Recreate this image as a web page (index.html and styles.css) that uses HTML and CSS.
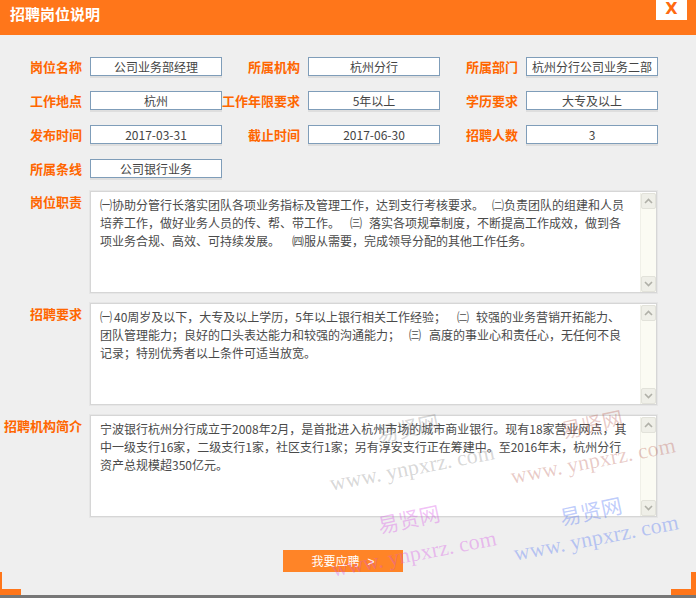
FILE: index.html
```html
<!DOCTYPE html>
<html lang="zh-CN">
<head>
<meta charset="utf-8">
<title>招聘岗位说明</title>
<link rel="stylesheet" href="styles.css">
</head>
<body>
<div class="dialog">
  <div class="header">
    <h1 class="title">招聘岗位说明</h1>
    <span class="close">X</span>
  </div>

  <div class="fields">
    <div class="row">
      <div class="field"><span class="lbl">岗位名称</span><div class="val">公司业务部经理</div></div>
      <div class="field"><span class="lbl">所属机构</span><div class="val">杭州分行</div></div>
      <div class="field"><span class="lbl">所属部门</span><div class="val">杭州分行公司业务二部</div></div>
    </div>
    <div class="row">
      <div class="field"><span class="lbl">工作地点</span><div class="val">杭州</div></div>
      <div class="field"><span class="lbl">工作年限要求</span><div class="val">5年以上</div></div>
      <div class="field"><span class="lbl">学历要求</span><div class="val">大专及以上</div></div>
    </div>
    <div class="row">
      <div class="field"><span class="lbl">发布时间</span><div class="val">2017-03-31</div></div>
      <div class="field"><span class="lbl">截止时间</span><div class="val">2017-06-30</div></div>
      <div class="field"><span class="lbl">招聘人数</span><div class="val">3</div></div>
    </div>
    <div class="row">
      <div class="field"><span class="lbl">所属条线</span><div class="val">公司银行业务</div></div>
    </div>
  </div>

  <div class="blocks">
    <div class="block">
      <span class="lbl blbl">岗位职责</span>
      <div class="area">
        <div class="text">
          <div class="ln">㈠协助分管行长落实团队各项业务指标及管理工作，达到支行考核要求。<span class="g8"></span>㈡负责团队的组建和人员</div>
          <div class="ln">培养工作，做好业务人员的传、帮、带工作。<span class="g10"></span>㈢<span class="g7"></span>落实各项规章制度，不断提高工作成效，做到各</div>
          <div class="ln">项业务合规、高效、可持续发展。<span class="g12"></span>㈣服从需要，完成领导分配的其他工作任务。</div>
        </div>
        <div class="sbar">
          <div class="sbtn"><svg width="9" height="6" viewBox="0 0 9 6"><polyline points="1,5 4.5,1.5 8,5" fill="none" stroke="#b0b0a8" stroke-width="1.6"/></svg></div>
          <div class="track"></div>
          <div class="sbtn"><svg width="9" height="6" viewBox="0 0 9 6"><polyline points="1,1 4.5,4.5 8,1" fill="none" stroke="#b0b0a8" stroke-width="1.6"/></svg></div>
        </div>
      </div>
    </div>

    <div class="block">
      <span class="lbl blbl">招聘要求</span>
      <div class="area">
        <div class="text">
          <div class="ln">㈠<span class="g2"></span>40周岁及以下，大专及以上学历，5年以上银行相关工作经验；<span class="g11"></span>㈡<span class="g7"></span>较强的业务营销开拓能力、</div>
          <div class="ln">团队管理能力；良好的口头表达能力和较强的沟通能力；<span class="g9"></span>㈢<span class="g8"></span>高度的事业心和责任心，无任何不良</div>
          <div class="ln">记录；特别优秀者以上条件可适当放宽。</div>
        </div>
        <div class="sbar">
          <div class="sbtn"><svg width="9" height="6" viewBox="0 0 9 6"><polyline points="1,5 4.5,1.5 8,5" fill="none" stroke="#b0b0a8" stroke-width="1.6"/></svg></div>
          <div class="track"></div>
          <div class="sbtn"><svg width="9" height="6" viewBox="0 0 9 6"><polyline points="1,1 4.5,4.5 8,1" fill="none" stroke="#b0b0a8" stroke-width="1.6"/></svg></div>
        </div>
      </div>
    </div>

    <div class="block">
      <span class="lbl blbl">招聘机构简介</span>
      <div class="area">
        <div class="text">
          <div class="ln">宁波银行杭州分行成立于2008年2月，是首批进入杭州市场的城市商业银行。现有18家营业网点，其</div>
          <div class="ln">中一级支行16家，二级支行1家，社区支行1家；另有淳安支行正在筹建中。至2016年末，杭州分行</div>
          <div class="ln">资产总规模超350亿元。</div>
        </div>
        <div class="sbar">
          <div class="sbtn"><svg width="9" height="6" viewBox="0 0 9 6"><polyline points="1,5 4.5,1.5 8,5" fill="none" stroke="#b0b0a8" stroke-width="1.6"/></svg></div>
          <div class="track"></div>
          <div class="sbtn"><svg width="9" height="6" viewBox="0 0 9 6"><polyline points="1,1 4.5,4.5 8,1" fill="none" stroke="#b0b0a8" stroke-width="1.6"/></svg></div>
        </div>
      </div>
    </div>
  </div>

  <div class="actions">
    <button class="apply" type="button">我要应聘<span class="arr">&gt;</span></button>
  </div>

  <div class="footer">
    <span class="corner corner-left"></span>
    <span class="corner corner-right"></span>
  </div>
  <div class="bar"></div>

  <div class="wm wm-cn wm-grey wm1">易贤网</div>
  <div class="wm wm-en wm-grey wm2">www. ynpxrz. com</div>
  <div class="wm wm-cn wm-red wm3">易贤网</div>
  <div class="wm wm-en wm-red wm4">www. ynpxrz. com</div>
  <div class="wm wm-cn wm-pink wm5">易贤网</div>
  <div class="wm wm-en wm-pink wm6">www. ynpxrz. com</div>
  <div class="wm wm-cn wm-blue wm7">易贤网</div>
  <div class="wm wm-en wm-blue wm8">www. ynpxrz. com</div>
</div>
</body>
</html>
```

FILE: styles.css
```css
* { box-sizing: border-box; }

body {
  margin: 0;
  background: #efefef;
  font-family: "Noto Sans CJK SC", "Liberation Sans", sans-serif;
}

.dialog {
  position: relative;
  width: 696px;
  height: 598px;
  display: flex;
  flex-direction: column;
  overflow: hidden;
  background: #efefef;
}

/* header */
.header {
  flex: none;
  height: 35px;
  background: #ff761a;
  display: flex;
  justify-content: space-between;
  align-items: flex-start;
}
.title {
  margin: 0;
  padding-left: 10px;
  font-size: 15px;
  font-weight: bold;
  line-height: 27px;
  color: #fff;
}
.close {
  width: 31px;
  height: 20px;
  margin-right: 9px;
  background: #fff;
  color: #ff6a10;
  font-family: "DejaVu Sans", sans-serif;
  font-weight: bold;
  font-size: 16px;
  line-height: 18px;
  text-align: center;
}

/* short fields */
.fields {
  flex: none;
  padding: 22px 0 0 4px;
  display: flex;
  flex-direction: column;
  gap: 15px;
}
.row {
  display: flex;
  height: 19px;
}
.field {
  width: 218px;
  display: flex;
  align-items: center;
}
.lbl {
  flex: none;
  width: 78px;
  display: flex;
  justify-content: flex-end;
  white-space: nowrap;
  font-size: 13px;
  font-weight: bold;
  line-height: 17px;
  color: #ff6600;
}
.val {
  width: 133px;
  height: 19px;
  margin-left: 8px;
  border: 1px solid #7f9db9;
  background: #fff;
  box-shadow: 0 2px 0 #dedede;
  font-size: 12px;
  line-height: 17px;
  text-align: center;
  color: #444;
  white-space: nowrap;
  overflow: hidden;
}

/* textareas */
.blocks {
  flex: none;
  margin-top: 13px;
  padding-left: 4px;
  display: flex;
  flex-direction: column;
  gap: 10px;
}
.block {
  display: flex;
  align-items: flex-start;
}
.blbl {
  margin-top: 2px;
}
.area {
  width: 567px;
  height: 102px;
  margin-left: 8px;
  border: 1px solid #d6d6d6;
  box-shadow: 0 0 0 1px #e6e6e6;
  background: #fff;
  display: flex;
}
.text {
  flex: 1;
  padding: 4px 0 0 9px;
  font-size: 12px;
  line-height: 18px;
  color: #4a4a4a;
  white-space: nowrap;
  overflow: hidden;
}
.ln span { display: inline-block; }
.g2 { width: 2px; }
.g7 { width: 7px; }
.g8 { width: 8px; }
.g9 { width: 9px; }
.g10 { width: 10px; }
.g11 { width: 11px; }
.g12 { width: 12px; }

.sbar {
  flex: none;
  width: 16px;
  margin-top: 1px;
  display: flex;
  flex-direction: column;
  background: #fbfbf3;
  border-left: 1px solid #f0f0e8;
}
.sbtn {
  height: 16px;
  display: flex;
  align-items: center;
  justify-content: center;
  background: #efefe8;
  border: 1px solid #e2e2da;
  border-radius: 2px;
}
.track { flex: 1; }

/* action */
.actions {
  flex: none;
  margin-top: 30px;
  padding-left: 283px;
}
.apply {
  width: 120px;
  height: 22px;
  padding: 0;
  border: 0;
  background: #ff8427;
  color: #fff;
  font-family: "Noto Sans CJK SC", "Liberation Sans", sans-serif;
  font-size: 12px;
  line-height: 22px;
  text-align: center;
}
.arr {
  margin-left: 8px;
  font-family: "Liberation Sans", sans-serif;
}

/* footer */
.footer {
  flex: none;
  margin-top: auto;
  height: 23px;
  display: flex;
  justify-content: space-between;
  align-items: flex-end;
}
.corner {
  height: 23px;
  border-bottom: 6px solid #ff761a;
}
.corner-left {
  width: 21px;
  border-left: 2px solid #ff761a;
}
.corner-right {
  width: 25px;
  border-right: 5px solid #ff761a;
}
.bar {
  flex: none;
  height: 3px;
  background: #777;
}

/* watermarks */
.wm {
  position: absolute;
  white-space: nowrap;
  pointer-events: none;
  line-height: 1;
  transform-origin: 0 50%;
}
.wm-cn {
  font-family: "Noto Sans CJK SC", sans-serif;
  font-size: 21px;
  transform: rotate(-12deg);
}
.wm-en {
  font-family: "Liberation Serif", serif;
  font-size: 22px;
  transform: rotate(-11deg);
}
.wm-grey { color: rgba(120, 120, 120, 0.3); }
.wm-red { color: rgba(175, 70, 55, 0.28); }
.wm-pink { color: rgba(215, 80, 230, 0.35); }
.wm-blue { color: rgba(70, 110, 245, 0.35); }

.wm1 { left: 377px; top: 424px; }
.wm2 { left: 330px; top: 473px; }
.wm3 { left: 561px; top: 420px; }
.wm4 { left: 511px; top: 466px; }
.wm5 { left: 378px; top: 515px; }
.wm6 { left: 332px; top: 559px; }
.wm7 { left: 560px; top: 507px; }
.wm8 { left: 514px; top: 543px; }
```
